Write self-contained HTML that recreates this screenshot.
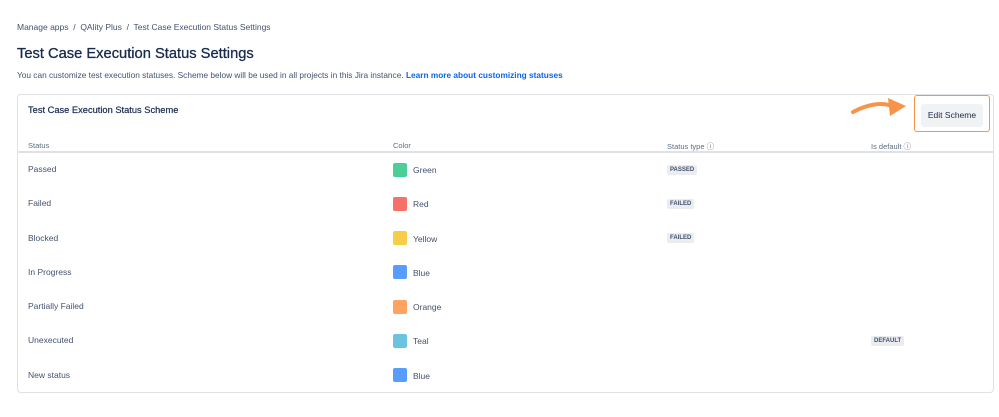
<!DOCTYPE html>
<html><head><meta charset="utf-8"><style>
*{margin:0;padding:0;box-sizing:border-box}
body{width:999px;height:417px;background:#fff;font-family:"Liberation Sans",sans-serif;color:#172b4d;position:relative;overflow:hidden}
.a{position:absolute;white-space:nowrap}
.bc{left:17px;top:22px;font-size:8.5px;color:#42526e}
h1{position:absolute;left:17px;top:46px;font-size:14.7px;font-weight:normal;color:#172b4d;-webkit-text-stroke:0.3px #172b4d}
.sub{left:17px;top:70px;font-size:8.3px;color:#42526e}
.sub b{color:#0c66e4}
.card{position:absolute;left:17px;top:94px;width:977px;height:299px;border:1px solid #dfe1e6;border-radius:4px}
.ct{left:28px;top:105px;font-size:9.3px;color:#172b4d;-webkit-text-stroke:0.2px #172b4d}
.hd{position:absolute;top:141px;font-size:7.5px;color:#5e6c84}
.hl{position:absolute;left:18px;top:151px;width:975px;height:2px;background:#dfe1e6}
.r{position:absolute;font-size:8.5px;color:#42526e}
.sw{position:absolute;left:393px;width:14px;height:14px;border-radius:2px}
.lz{position:absolute;font-size:6px;font-weight:bold;background:#ebecf0;color:#42526e;padding:2px 3px;border-radius:2px}
.btn{position:absolute;left:921px;top:104px;width:62px;height:23px;background:#f1f2f4;border-radius:3px;font-size:8.5px;line-height:23px;text-align:center;color:#172b4d}
.ob{position:absolute;left:914px;top:95px;width:76px;height:37px;border:1.5px solid #f7944a;border-radius:3px}
</style></head><body>
<div class="a bc">Manage apps &nbsp;/&nbsp; QAlity Plus &nbsp;/&nbsp; Test Case Execution Status Settings</div>
<h1>Test Case Execution Status Settings</h1>
<div class="a sub">You can customize test execution statuses. Scheme below will be used in all projects in this Jira instance. <b>Learn more about customizing statuses</b></div>
<div class="card"></div>
<div class="a ct">Test Case Execution Status Scheme</div>
<div class="hd" style="left:28px">Status</div>
<div class="hd" style="left:393px">Color</div>
<div class="hd" style="left:667px">Status type ⓘ</div>
<div class="hd" style="left:871px">Is default ⓘ</div>
<div class="hl"></div>
<div class="r" style="left:28px;top:164px">Passed</div><div class="sw" style="top:163px;background:#4bce97"></div><div class="r" style="left:413px;top:165px">Green</div><div class="lz" style="left:667px;top:165px">PASSED</div>
<div class="r" style="left:28px;top:198px">Failed</div><div class="sw" style="top:197px;background:#f87168"></div><div class="r" style="left:413px;top:199px">Red</div><div class="lz" style="left:667px;top:199px">FAILED</div>
<div class="r" style="left:28px;top:233px">Blocked</div><div class="sw" style="top:231px;background:#f5cd47"></div><div class="r" style="left:413px;top:234px">Yellow</div><div class="lz" style="left:667px;top:233px">FAILED</div>
<div class="r" style="left:28px;top:267px">In Progress</div><div class="sw" style="top:265px;background:#579dff"></div><div class="r" style="left:413px;top:268px">Blue</div>
<div class="r" style="left:28px;top:301px">Partially Failed</div><div class="sw" style="top:300px;background:#fea362"></div><div class="r" style="left:413px;top:302px">Orange</div>
<div class="r" style="left:28px;top:335px">Unexecuted</div><div class="sw" style="top:334px;background:#6cc3e0"></div><div class="r" style="left:413px;top:336px">Teal</div><div class="lz" style="left:871px;top:336px">DEFAULT</div>
<div class="r" style="left:28px;top:370px">New status</div><div class="sw" style="top:368px;background:#579dff"></div><div class="r" style="left:413px;top:371px">Blue</div>
<div class="btn">Edit Scheme</div>
<div class="ob"></div>
<svg class="a" style="left:850px;top:96px" width="62" height="26" viewBox="0 0 62 26"><path d="M3 16 C18 8 32 6 42 10" stroke="#f7944a" stroke-width="4" fill="none" stroke-linecap="round"/><path d="M38 2 L56 10 L40 20 Z" fill="#f7944a"/></svg>
</body></html>
